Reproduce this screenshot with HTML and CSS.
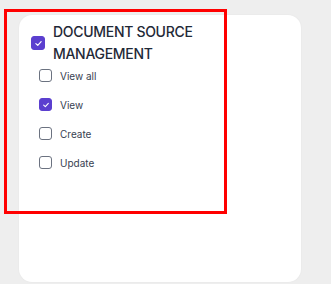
FILE: index.html
```html
<!DOCTYPE html>
<html lang="en">
<head>
  <meta charset="UTF-8" />
  <meta name="viewport" content="width=device-width, initial-scale=1.0"/>
  <title>Document source permissions</title>
  <link rel="stylesheet" href="styles.css">
</head>
<body>

  <div class="card">
    <div class="group-header">
      <span class="box checked">
        <svg viewBox="0 0 12 12" width="9" height="9"><path d="M2.5 6.2 L5 8.5 L9.5 3.5" fill="none" stroke="white" stroke-width="1.6" stroke-linecap="round" stroke-linejoin="round"/></svg>
      </span>
      <h2>DOCUMENT SOURCE<br />MANAGEMENT</h2>
    </div>

    <ul class="perm-list">
      <li><span class="box"></span>View all</li>
      <li>
        <span class="box checked">
          <svg viewBox="0 0 12 12" width="8" height="8"><path d="M2.5 6.2 L5 8.5 L9.5 3.5" fill="none" stroke="white" stroke-width="1.6" stroke-linecap="round" stroke-linejoin="round"/></svg>
        </span>View
      </li>
      <li><span class="box"></span>Create</li>
      <li><span class="box"></span>Update</li>
    </ul>
  </div>

  <div class="highlight"></div>

</body>
</html>
```

FILE: styles.css
```css
html, body {
  margin: 0;
  padding: 0;
  font-family: Inter, 'Noto Sans', sans-serif;
  background-color: #eeeeee;
  height: 100vh;
  overflow: hidden;
}

.card {
  margin: 15px 0 0 19px;
  width: 282px;
  height: 267px;
  box-sizing: border-box;
  background: white;
  border-radius: 13px;
  padding: 6px 12px;
  box-shadow: 0 0 2px rgba(0, 0, 0, 0.05);
}

.group-header {
  display: flex;
  align-items: center;
  gap: 8px;
}

.group-header h2 {
  margin: 0;
  font-size: 14px;
  line-height: 22px;
  font-weight: 500;
  letter-spacing: -0.3px;
  color: #1f2937;
}

.box {
  display: inline-flex;
  align-items: center;
  justify-content: center;
  width: 13px;
  height: 13px;
  box-sizing: border-box;
  border: 1.5px solid #6b7280;
  border-radius: 3px;
  flex-shrink: 0;
}

.box.checked {
  background-color: #5b3fcf;
  border-color: #5b3fcf;
}

.group-header .box {
  width: 14px;
  height: 14px;
}

.perm-list {
  list-style: none;
  margin: 0;
  padding: 0 0 0 8px;
  margin-top: -4px;
}

.perm-list li {
  display: flex;
  align-items: center;
  gap: 8px;
  height: 29px;
  font-size: 10px;
  color: #374151;
}

.highlight {
  position: absolute;
  left: 4px;
  top: 9px;
  width: 223px;
  height: 205px;
  box-sizing: border-box;
  border: 3px solid #ff0000;
}
```
